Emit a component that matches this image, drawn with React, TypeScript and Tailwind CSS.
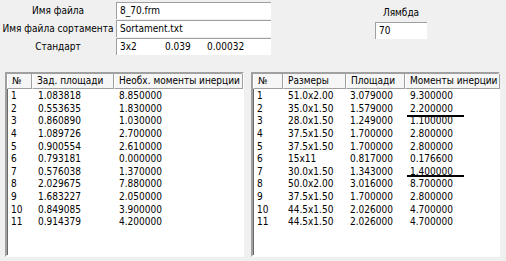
import React from 'react';

const left = [
  ['1', '1.083818', '8.850000'],
  ['2', '0.553635', '1.830000'],
  ['3', '0.860890', '1.030000'],
  ['4', '1.089726', '2.700000'],
  ['5', '0.900554', '2.610000'],
  ['6', '0.793181', '0.000000'],
  ['7', '0.576038', '1.370000'],
  ['8', '2.029675', '7.880000'],
  ['9', '1.683227', '2.050000'],
  ['10', '0.849085', '3.900000'],
  ['11', '0.914379', '4.200000'],
];

const right = [
  ['1', '51.0x2.00', '3.079000', '9.300000'],
  ['2', '35.0x1.50', '1.579000', '2.200000'],
  ['3', '28.0x1.50', '1.249000', '1.100000'],
  ['4', '37.5x1.50', '1.700000', '2.800000'],
  ['5', '37.5x1.50', '1.700000', '2.800000'],
  ['6', '15x11', '0.817000', '0.176600'],
  ['7', '30.0x1.50', '1.343000', '1.400000'],
  ['8', '50.0x2.00', '3.016000', '8.700000'],
  ['9', '37.5x1.50', '1.700000', '2.800000'],
  ['10', '44.5x1.50', '2.026000', '4.700000'],
  ['11', '44.5x1.50', '2.026000', '4.700000'],
];

const Field = ({ children, className = '' }: { children: React.ReactNode; className?: string }) => (
  <div
    className={`h-[17px] bg-white border-t border-l border-[#a0a0a0] border-r-white border-b-white flex items-center pl-[3px] ${className}`}
  >
    {children}
  </div>
);

const Head = ({ label, w }: { label: string; w: string }) => (
  <div className={`${w} h-[15px] flex items-center pl-[4px] bg-[#f6f6f6] border-r border-b border-[#a0a0a0] border-l border-l-white shrink-0 overflow-hidden`}>
    {label}
  </div>
);

export default function App() {
  return (
    <div className="w-[506px] h-[261px] bg-[#f0f0f0] text-[10px] leading-none text-black whitespace-nowrap font-['DejaVu_Sans_Condensed','DejaVu_Sans',sans-serif] overflow-hidden">
      <div className="flex h-[72px]">
        <div className="flex flex-col pt-[2px] gap-[1px]">
          <div className="flex">
            <div className="w-[116px] h-[17px] flex items-center justify-center">Имя файла</div>
            <Field className="w-[155px]">8_70.frm</Field>
          </div>
          <div className="flex">
            <div className="w-[116px] h-[17px] flex items-center justify-center">Имя файла сортамента</div>
            <Field className="w-[155px]">Sortament.txt</Field>
          </div>
          <div className="flex">
            <div className="w-[116px] h-[17px] flex items-center justify-center">Стандарт</div>
            <Field className="w-[155px]">
              <span className="w-[45px]">3x2</span>
              <span className="w-[42px]">0.039</span>
              <span>0.00032</span>
            </Field>
          </div>
        </div>
        <div className="ml-[104px] pt-[6px] flex flex-col items-center w-[52px]">
          <div className="h-[13px] flex items-center">Лямбда</div>
          <Field className="w-[52px] mt-[3px]">70</Field>
        </div>
      </div>

      <div className="flex pl-[5px] gap-[7px]">
        <div className="w-[239px] h-[185px] bg-white border-2 border-t-[#a0a0a0] border-l-[#a0a0a0] border-r-white border-b-white shadow-[inset_1px_1px_0_#696969]">
          <div className="flex">
            <Head label="№" w="w-[25px]" />
            <Head label="Зад. площади" w="w-[82px]" />
            <Head label="Необх. моменты инерции" w="w-[129px]" />
          </div>
          <div className="pt-[1px]">
            {left.map((r) => (
              <div key={r[0]} className="flex h-[12.6px] items-center">
                <span className="w-[31px] pl-[4px]">{r[0]}</span>
                <span className="w-[81px]">{r[1]}</span>
                <span>{r[2]}</span>
              </div>
            ))}
          </div>
        </div>

        <div className="w-[249px] h-[185px] bg-white border-2 border-t-[#a0a0a0] border-l-[#a0a0a0] border-r-white border-b-white shadow-[inset_1px_1px_0_#696969]">
          <div className="flex">
            <Head label="№" w="w-[30px]" />
            <Head label="Размеры" w="w-[63px]" />
            <Head label="Площади" w="w-[59px]" />
            <Head label="Моменты инерции" w="w-[95px]" />
          </div>
          <div className="pt-[1px]">
            {right.map((r) => (
              <div key={r[0]} className="flex h-[12.6px] items-center">
                <span className="w-[35px] pl-[4px]">{r[0]}</span>
                <span className="w-[62px]">{r[1]}</span>
                <span className="w-[60px]">{r[2]}</span>
                <span className="relative">
                  {r[3]}
                  {r[0] === '2' && (
                    <span className="absolute left-[-3px] top-[11px] w-[57px] h-[2px] bg-black" />
                  )}
                  {r[0] === '7' && (
                    <span className="absolute left-[-3px] top-[8px] w-[57px] h-[2px] bg-black" />
                  )}
                </span>
              </div>
            ))}
          </div>
        </div>
      </div>
    </div>
  );
}
